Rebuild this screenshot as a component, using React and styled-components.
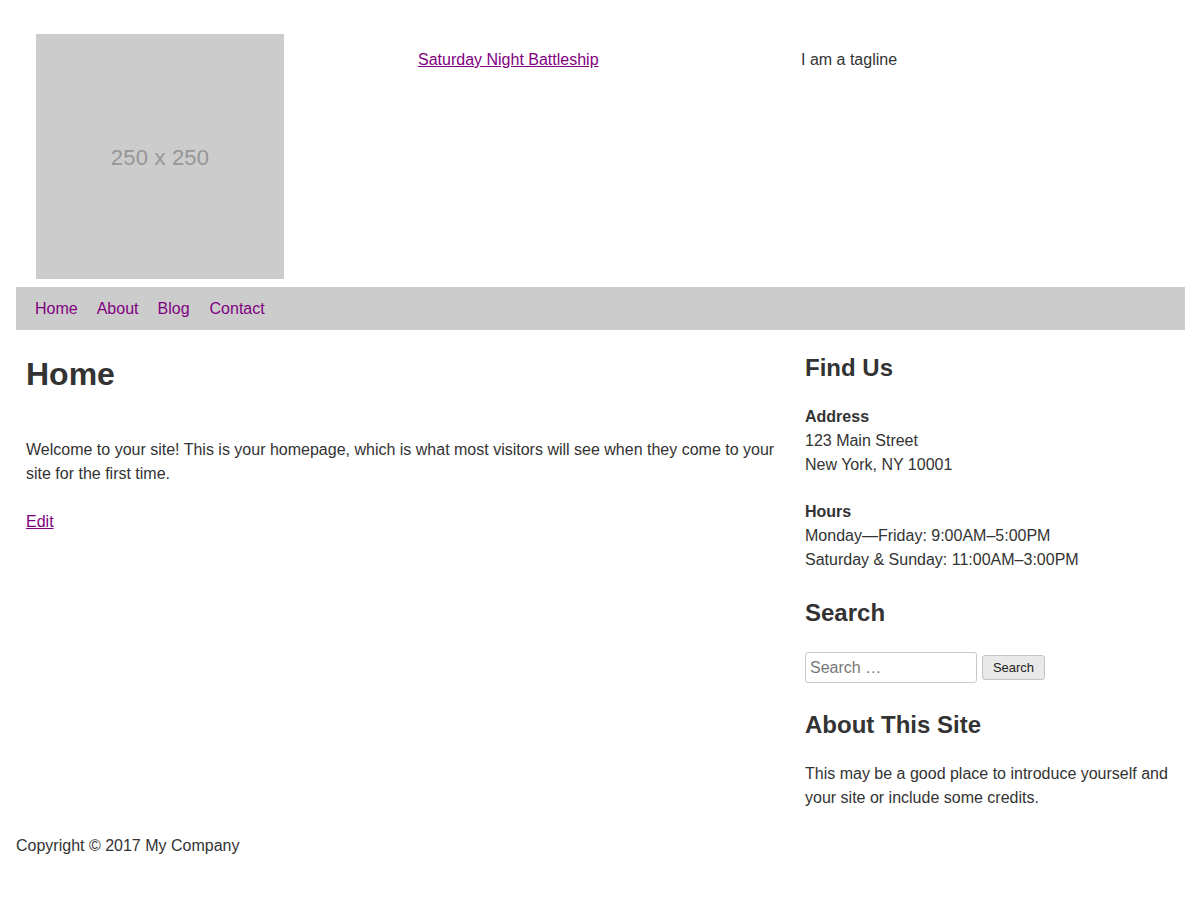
import React from "react";
import styled, { createGlobalStyle } from "styled-components";

const Global = createGlobalStyle`
  html, body { margin: 0; padding: 0; background: #fff; }
  body {
    font-family: "Liberation Sans", Helvetica, Arial, sans-serif;
    font-size: 16px;
    line-height: 24px;
    color: #333;
  }
  * { box-sizing: border-box; }
`;

const Page = styled.div`
  padding: 0 15px 0 16px;
`;

const Header = styled.header`
  display: grid;
  grid-template-columns: 382px 383px 1fr;
  padding-top: 14px;
`;

const HeaderCell = styled.div`
  padding: 20px 20px 8px;
`;

const Placeholder = styled.div`
  width: 248px;
  height: 245px;
  background: #cccccc;
  display: flex;
  align-items: center;
  justify-content: center;
  padding-top: 3px;
  color: #969696;
  font-size: 22px;
  letter-spacing: 0.2px;
`;

const SiteTitle = styled.a`
  display: inline-block;
  margin-top: 14px;
  color: #800080;
  text-decoration: underline;
`;

const Tagline = styled.p`
  margin: 14px 0 0;
`;

const Nav = styled.nav`
  height: 43px;
  background: #cccccc;
  display: flex;
  align-items: center;
  gap: 19px;
  padding-left: 19px;
`;

const NavLink = styled.a`
  color: #800080;
  text-decoration: none;
  font-size: 16px;
  &:last-child { margin-left: 1px; }
`;

const Content = styled.div`
  display: grid;
  grid-template-columns: 779px 1fr;
  align-items: start;
`;

const Main = styled.main`
  padding: 0 10px;
`;

const PageTitle = styled.h1`
  margin: 26px 0 0;
  font-size: 32px;
  line-height: 37px;
  font-weight: bold;
`;

const Para = styled.p`
  margin: ${(p) => p.$top || 24}px 0 0;
`;

const Link = styled.a`
  color: #800080;
  text-decoration: underline;
`;

const Sidebar = styled.aside`
  padding: 24px 10px 0;
  display: flex;
  flex-direction: column;
`;

const Widget = styled.section`
  margin-top: ${(p) => p.$top || 0}px;
`;

const WidgetTitle = styled.h2`
  margin: 0 0 ${(p) => p.$mb || 23}px;
  font-size: 24px;
  line-height: 28px;
  font-weight: bold;
`;

const Block = styled.p`
  margin: ${(p) => p.$top || 0}px 0 0;
`;

const SearchForm = styled.form`
  display: flex;
  align-items: center;
  gap: 5px;
`;

const SearchInput = styled.input`
  width: 172px;
  height: 31px;
  border: 1px solid #c8c8c8;
  border-radius: 3px;
  padding: 0 4px;
  font-family: inherit;
  font-size: 16px;
  color: #333;
  &::placeholder { color: #777; }
`;

const SearchButton = styled.button`
  width: 63px;
  height: 25px;
  border: 1px solid #c4c4c4;
  border-radius: 3px;
  background: #e9e9e9;
  font-family: inherit;
  font-size: 13px;
  color: #222;
  padding: 0;
`;

const Footer = styled.footer`
  margin-top: 24px;
  padding-bottom: 40px;
`;

export default function App() {
  return (
    <>
      <Global />
      <Page>
        <Header>
          <HeaderCell>
            <Placeholder>250 x 250</Placeholder>
          </HeaderCell>
          <HeaderCell>
            <SiteTitle href="#">Saturday Night Battleship</SiteTitle>
          </HeaderCell>
          <HeaderCell>
            <Tagline>I am a tagline</Tagline>
          </HeaderCell>
        </Header>
        <Nav>
          <NavLink href="#">Home</NavLink>
          <NavLink href="#">About</NavLink>
          <NavLink href="#">Blog</NavLink>
          <NavLink href="#">Contact</NavLink>
        </Nav>
        <Content>
          <Main>
            <PageTitle>Home</PageTitle>
            <Para $top={45}>
              Welcome to your site! This is your homepage, which is what most
              visitors will see when they come to your site for the first time.
            </Para>
            <Para>
              <Link href="#">Edit</Link>
            </Para>
          </Main>
          <Sidebar>
            <Widget>
              <WidgetTitle>Find Us</WidgetTitle>
              <Block>
                <strong>Address</strong>
                <br />
                123 Main Street
                <br />
                New York, NY 10001
              </Block>
              <Block $top={23}>
                <strong>Hours</strong>
                <br />
                Monday—Friday: 9:00AM–5:00PM
                <br />
                Saturday &amp; Sunday: 11:00AM–3:00PM
              </Block>
            </Widget>
            <Widget $top={27}>
              <WidgetTitle $mb={25}>Search</WidgetTitle>
              <SearchForm onSubmit={(e) => e.preventDefault()}>
                <SearchInput type="search" placeholder="Search …" />
                <SearchButton type="submit">Search</SearchButton>
              </SearchForm>
            </Widget>
            <Widget $top={28}>
              <WidgetTitle>About This Site</WidgetTitle>
              <Block>
                This may be a good place to introduce yourself and your site or
                include some credits.
              </Block>
            </Widget>
          </Sidebar>
        </Content>
        <Footer>Copyright © 2017 My Company</Footer>
      </Page>
    </>
  );
}
